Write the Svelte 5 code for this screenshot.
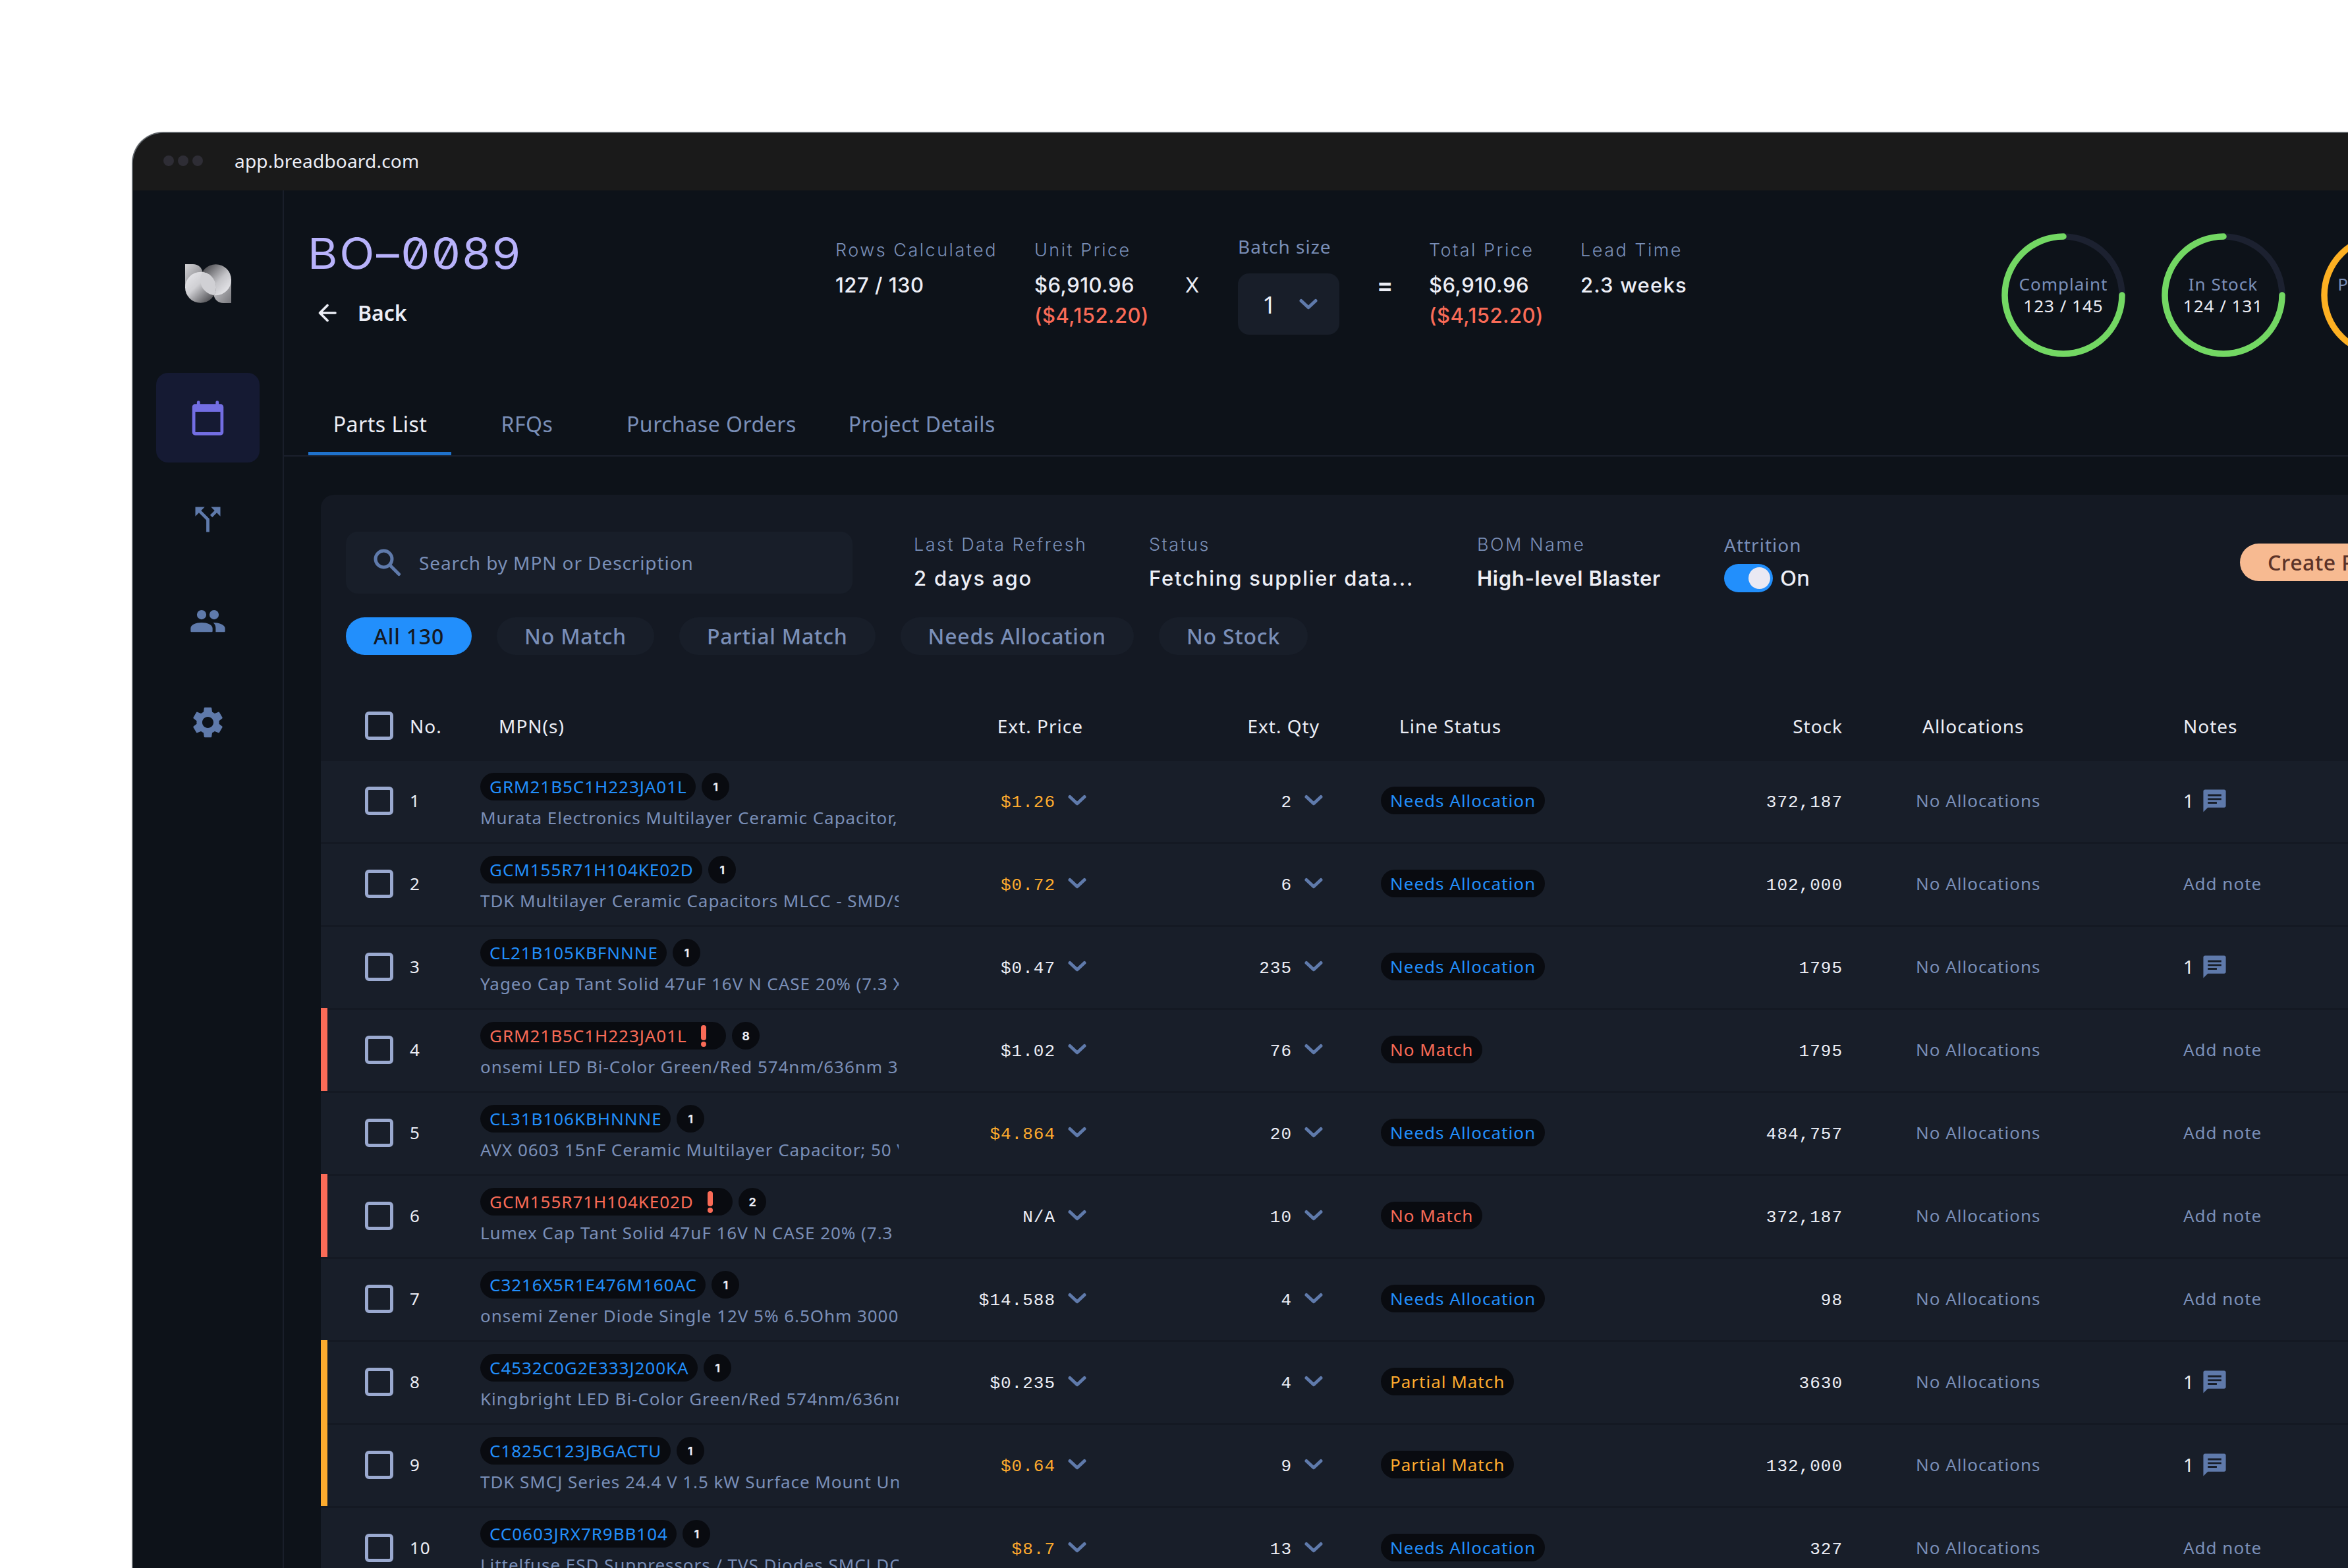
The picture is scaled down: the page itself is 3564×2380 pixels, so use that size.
<script>
  const tabs = ['Parts List', 'RFQs', 'Purchase Orders', 'Project Details'];
  const filters = ['All 130', 'No Match', 'Partial Match', 'Needs Allocation', 'No Stock'];

  let activeTab = $state('Parts List');
  let activeFilter = $state('All 130');
  let attrition = $state(true);

  const rings = [
    { label: 'Complaint', value: '123 / 145', color: '#73d863' },
    { label: 'In Stock', value: '124 / 131', color: '#73d863' },
    { label: 'Purchased', value: '90 / 98', color: '#fdb022' }
  ];

  const needs = 'Needs Allocation';
  const rows = [
    { mpn: 'GRM21B5C1H223JA01L', count: 1, desc: 'Murata Electronics Multilayer Ceramic Capacitor, 0.022uF', price: '$1.26', warn: true, qty: '2', status: needs, stock: '372,187', notes: 1 },
    { mpn: 'GCM155R71H104KE02D', count: 1, desc: 'TDK Multilayer Ceramic Capacitors MLCC - SMD/SMT', price: '$0.72', warn: true, qty: '6', status: needs, stock: '102,000', notes: 0 },
    { mpn: 'CL21B105KBFNNNE', count: 1, desc: 'Yageo Cap Tant Solid 47uF 16V N CASE 20% (7.3 X 4.3', price: '$0.47', qty: '235', status: needs, stock: '1795', notes: 1 },
    { mpn: 'GRM21B5C1H223JA01L', count: 8, desc: 'onsemi LED Bi-Color Green/Red 574nm/636nm 3', price: '$1.02', qty: '76', status: 'No Match', stock: '1795', notes: 0 },
    { mpn: 'CL31B106KBHNNNE', count: 1, desc: 'AVX 0603 15nF Ceramic Multilayer Capacitor; 50 V', price: '$4.864', warn: true, qty: '20', status: needs, stock: '484,757', notes: 0 },
    { mpn: 'GCM155R71H104KE02D', count: 2, desc: 'Lumex Cap Tant Solid 47uF 16V N CASE 20% (7.3', price: 'N/A', qty: '10', status: 'No Match', stock: '372,187', notes: 0 },
    { mpn: 'C3216X5R1E476M160AC', count: 1, desc: 'onsemi Zener Diode Single 12V 5% 6.5Ohm 3000', price: '$14.588', qty: '4', status: needs, stock: '98', notes: 0 },
    { mpn: 'C4532C0G2E333J200KA', count: 1, desc: 'Kingbright LED Bi-Color Green/Red 574nm/636nm 3', price: '$0.235', qty: '4', status: 'Partial Match', stock: '3630', notes: 1 },
    { mpn: 'C1825C123JBGACTU', count: 1, desc: 'TDK SMCJ Series 24.4 V 1.5 kW Surface Mount Uni', price: '$0.64', warn: true, qty: '9', status: 'Partial Match', stock: '132,000', notes: 1 },
    { mpn: 'CC0603JRX7R9BB104', count: 1, desc: 'Littelfuse ESD Suppressors / TVS Diodes SMCJ DO-214', price: '$8.7', warn: true, qty: '13', status: needs, stock: '327', notes: 0 }
  ];

  function tone(status) {
    if (status === 'No Match') return 'red';
    if (status === 'Partial Match') return 'amber';
    return 'blue';
  }
</script>

{#snippet chevron()}
  <svg class="chevron" width="28" height="18" viewBox="0 0 28 18">
    <path d="M3 3.5 14 13.8 25 3.5" />
  </svg>
{/snippet}

<div class="page">
  <div class="window">
    <div class="titlebar">
      <span class="dots"><i></i><i></i><i></i></span>
      <span class="url">app.breadboard.com</span>
    </div>

    <div class="app">
      <nav class="sidebar">
        <svg class="logo" width="70" height="59" viewBox="0 0 70 59">
          <defs>
            <linearGradient id="leaf" x1="0" y1="0" x2="1" y2="1">
              <stop offset="0" stop-color="#d3d3d6" />
              <stop offset="1" stop-color="#77777c" />
            </linearGradient>
            <linearGradient id="ringA" x1="0.15" y1="0.1" x2="0.85" y2="0.85">
              <stop offset="0" stop-color="#e2e2e6" />
              <stop offset="0.4" stop-color="#cfcfd3" />
              <stop offset="1" stop-color="#56565a" />
            </linearGradient>
            <linearGradient id="ringB" x1="0.15" y1="0.15" x2="0.85" y2="0.85">
              <stop offset="0" stop-color="#56565a" />
              <stop offset="0.6" stop-color="#c4c4c8" />
              <stop offset="1" stop-color="#e2e2e6" />
            </linearGradient>
            <clipPath id="left"><circle cx="23.5" cy="35.3" r="23.5" /></clipPath>
          </defs>
          <path fill="url(#leaf)" d="M0 0h12c8 0 13 5 15 13L0 36z" />
          <path fill="url(#leaf)" d="M70 59H58c-8 0-13-5-15-13L70 23z" />
          <circle cx="46.5" cy="23.7" r="23.5" fill="url(#ringB)" />
          <circle cx="23.5" cy="35.3" r="23.5" fill="url(#ringA)" />
          <circle cx="46.5" cy="23.7" r="23.5" fill="#d0d0d4" clip-path="url(#left)" />
        </svg>

        <a class="nav-item active" href="#projects" aria-label="Projects">
          <svg viewBox="0 0 24 24"><path fill-rule="evenodd" d="M19 3V1.9a1 1 0 0 0-2 0V3H7V1.9a1 1 0 0 0-2 0V3H4c-1.1 0-2 .9-2 2v16c0 1.1.7 2 2 2h16c1.3 0 2-.9 2-2V5c0-1.100-.9-2-2-2zM4 8h16v13H4z" /></svg>
        </a>
        <a class="nav-item" href="#split" aria-label="Split">
          <svg viewBox="0 0 24 24"><path d="M14 4l2.290 2.290-2.880 2.880 1.420 1.420 2.880-2.880L20 10V4zM10 4H4v6l2.290-2.290 4.710 4.700V20h2v-8.410l-5.290-5.300z" /></svg>
        </a>
        <a class="nav-item" href="#team" aria-label="Team">
          <svg viewBox="0 0 24 24"><path d="M16 11a3 3 0 1 0 0-6 3 3 0 0 0 0 6zM8 11a3 3 0 1 0 0-6 3 3 0 0 0 0 6zM8 13c-3.500 0-7 1.300-7 3.700V18.500q0 .5.5.5h13q.5 0 .5-.5V16.700C15 14.300 11.500 13 8 13zM15.400 13c1 .9 1.600 2 1.600 3.500V19h5.500q.5 0 .5-.5V16.700c0-2.300-4.200-3.700-7.600-3.700z" /></svg>
        </a>
        <a class="nav-item" href="#settings" aria-label="Settings">
          <svg viewBox="0 0 24 24"><path d="M19.140 12.940c.04-.3.06-.61.06-.94 0-.32-.02-.64-.07-.94l2.030-1.580c.18-.14.23-.41.12-.61l-1.920-3.320c-.12-.22-.37-.29-.59-.22l-2.390.96c-.5-.38-1.030-.7-1.620-.94l-.36-2.540c-.04-.24-.24-.41-.48-.41h-3.840c-.24 0-.43.17-.47.41l-.36 2.540c-.59.24-1.130.57-1.620.94l-2.390-.96c-.22-.08-.47 0-.59.22L2.740 8.870c-.12.21-.08.47.12.61l2.030 1.580c-.05.3-.09.63-.09.94s.02.64.07.94l-2.030 1.580c-.18.14-.23.41-.12.61l1.920 3.320c.12.22.37.29.59.22l2.390-.96c.5.38 1.030.7 1.620.94l.36 2.540c.05.24.24.41.48.41h3.840c.24 0 .44-.17.47-.41l.36-2.540c.59-.24 1.130-.56 1.620-.94l2.390.96c.22.08.47 0 .59-.22l1.920-3.320c.12-.22.07-.47-.12-.61l-2.010-1.580zM12 15.600c-1.980 0-3.600-1.620-3.600-3.600s1.620-3.600 3.600-3.600 3.600 1.620 3.600 3.600-1.620 3.600-3.600 3.600z" /></svg>
        </a>
      </nav>

      <main>
        <header>
          <div class="heading">
            <h1>BO–0089</h1>
            <a class="back" href="#back">
              <svg width="28" height="28" viewBox="0 0 28 28"><path d="M26 14H3M14 2.500 2.500 14 14 25.500" /></svg>
              Back
            </a>
          </div>

          <div class="totals">
            <div><span class="label">Rows Calculated</span><b>127 / 130</b></div>
            <div><span class="label">Unit Price</span><b>$6,910.96</b><b class="neg">($4,152.20)</b></div>
            <b class="op">X</b>
            <div class="batch">
              <span class="label noto">Batch size</span>
              <button class="select">1 {@render chevron()}</button>
            </div>
            <b class="op eq">=</b>
            <div><span class="label">Total Price</span><b>$6,910.96</b><b class="neg">($4,152.20)</b></div>
            <div><span class="label">Lead Time</span><b class="wide">2.3 weeks</b></div>
          </div>

          <div class="rings">
            {#each rings as ring}
              <div class="ring">
                <svg width="188" height="188" viewBox="0 0 188 188">
                  <circle cx="94" cy="94" r="89" stroke="#1c2130" />
                  <path d="M183 94A89 89 0 1 1 94 5" stroke={ring.color} />
                </svg>
                <span class="ring-label">{ring.label}</span>
                <span>{ring.value}</span>
              </div>
            {/each}
          </div>
        </header>

        <div class="tabs">
          {#each tabs as tab}
            <button class:active={tab === activeTab} onclick={() => (activeTab = tab)}>{tab}</button>
          {/each}
        </div>

        <section class="panel">
          <div class="toolbar">
            <div class="search">
              <svg width="42" height="42" viewBox="0 0 42 42"><circle cx="15.500" cy="15.500" r="12.500" /><path d="M25 25 38.500 38.500" /></svg>
              Search by MPN or Description
            </div>
            <div><span class="label">Last Data Refresh</span><b class="wide">2 days ago</b></div>
            <div><span class="label">Status</span><b class="wide">Fetching supplier data...</b></div>
            <div><span class="label">BOM Name</span><b class="strong">High-level Blaster</b></div>
            <div>
              <span class="label noto">Attrition</span>
              <div class="switch-row">
                <button class="switch" class:off={!attrition} aria-label="Attrition" onclick={() => (attrition = !attrition)}><i></i></button>
                {attrition ? 'On' : 'Off'}
              </div>
            </div>
            <button class="create">Create RFQ</button>
          </div>

          <div class="filters">
            {#each filters as filter}
              <button class:active={filter === activeFilter} onclick={() => (activeFilter = filter)}>{filter}</button>
            {/each}
          </div>

          <div class="grid head">
            <span class="bar"></span>
            <span class="check"></span>
            <span class="no">No.</span>
            <span class="h-mpn">MPN(s)</span>
            <span class="h-num">Ext. Price</span>
            <span class="h-num">Ext. Qty</span>
            <span class="h-status">Line Status</span>
            <span class="h-stock">Stock</span>
            <span class="h-alloc">Allocations</span>
            <span>Notes</span>
          </div>

          {#each rows as row, i}
            <div class="grid row">
              <span class="bar {tone(row.status)}"></span>
              <span class="check"></span>
              <span class="no">{i + 1}</span>
              <div class="mpn">
                <div class="mpn-line">
                  <span class="pill" class:red={row.status === 'No Match'}>
                    {row.mpn}
                    {#if row.status === 'No Match'}
                      <svg width="10" height="34" viewBox="0 0 10 34"><path d="M5 5v15" /><circle cx="5" cy="30" r="4" /></svg>
                    {/if}
                  </span>
                  <span class="count">{row.count}</span>
                </div>
                <div class="desc">{row.desc}</div>
              </div>
              <div class="num" class:warn={row.warn}><span>{row.price}</span>{@render chevron()}</div>
              <div class="num"><span>{row.qty}</span>{@render chevron()}</div>
              <div class="status"><span class="pill {tone(row.status)}">{row.status}</span></div>
              <div class="stock"><span>{row.stock}</span></div>
              <div class="alloc">No Allocations</div>
              {#if row.notes}
                <div class="notes">
                  <span>{row.notes}</span>
                  <svg width="41" height="41" viewBox="0 0 24 24"><path fill-rule="evenodd" d="M20.500 2h-17C2.700 2 2 2.700 2 3.500V22l4-4h14.500c.8 0 1.500-.7 1.500-1.500v-13c0-.8-.7-1.500-1.500-1.500zM6 6.200h12v1.700H6zM6 9.600h12v1.700H6zM6 12.900h8v1.700H6z" /></svg>
                </div>
              {:else}
                <div class="muted">Add note</div>
              {/if}
            </div>
          {/each}
        </section>
      </main>
    </div>
  </div>
</div>

<style>
  :global(body) {
    background: #fff;
    overflow: hidden;
  }

  .page {
    box-sizing: border-box;
    width: 3564px;
    height: 2380px;
    padding: 200px 0 0 200px;
    overflow: hidden;
    font-family: 'Noto Sans', sans-serif;
    font-size: 26px;
    color: #eceef6;
  }

  .page * {
    box-sizing: border-box;
  }

  button {
    border: 0;
    padding: 0;
    font: inherit;
    color: inherit;
    background: none;
    text-align: left;
    cursor: pointer;
  }

  a {
    color: inherit;
    text-decoration: none;
  }

  .window {
    width: 3364px;
    height: 2180px;
    border: 2px solid #62676b;
    border-width: 2px 0 0 2px;
    border-radius: 48px 0 0 0;
    background: #0d1219;
    overflow: hidden;
  }

  .titlebar {
    display: flex;
    align-items: center;
    height: 87px;
    padding: 0 0 4px 46px;
    background: #1a1a1a;
  }

  .dots {
    display: flex;
    gap: 6px;
    margin-right: 48px;
  }

  .dots i {
    width: 16px;
    height: 16px;
    border-radius: 50%;
    background: #2e2d35;
  }

  .url {
    font-size: 28px;
    letter-spacing: 0.2px;
  }

  .app {
    display: flex;
    height: 2091px;
  }

  /* sidebar */
  .sidebar {
    display: flex;
    flex-direction: column;
    align-items: center;
    gap: 18px;
    flex: none;
    width: 229px;
    padding-top: 112px;
    border-right: 2px solid #191e2a;
  }

  .logo {
    margin-bottom: 88px;
  }

  .nav-item {
    display: flex;
    align-items: center;
    justify-content: center;
    width: 157px;
    height: 136px;
    border-radius: 18px;
  }

  .nav-item svg {
    width: 57px;
    height: 57px;
    fill: #5f7aab;
  }

  .nav-item.active {
    background: #151a33;
  }

  .nav-item.active svg {
    fill: #736ee3;
  }

  main {
    flex: none;
    width: 3133px;
  }

  /* header */
  header {
    display: flex;
    align-items: flex-start;
    height: 309px;
    padding-left: 36px;
  }

  .heading {
    flex: none;
    width: 801px;
    padding-top: 56px;
  }

  h1 {
    margin: 0;
    font: 400 64px/80px Inter, sans-serif;
    font-feature-settings: 'zero';
    letter-spacing: 2.500px;
    color: #b8b2fb;
    transform: scaleX(1.085);
    transform-origin: left;
  }

  .back {
    display: flex;
    align-items: center;
    gap: 32px;
    margin-top: 28px;
    padding-left: 16px;
    font-size: 32px;
    line-height: 44px;
    font-weight: 600;
  }

  .back svg {
    fill: none;
    stroke: #eceef6;
    stroke-width: 3.6;
    stroke-linecap: round;
    stroke-linejoin: round;
  }

  .totals {
    display: grid;
    flex: none;
    grid-template-columns: 302px 229px 80px 211px 79px 230px 240px;
    align-items: start;
    width: 1770px;
    padding-top: 71px;
  }

  .label {
    display: block;
    font: 300 27px/40px Inter, sans-serif;
    letter-spacing: 2.500px;
    color: #7a8fb8;
    white-space: nowrap;
  }

  .label.noto {
    font: 400 28px/40px 'Noto Sans', sans-serif;
    letter-spacing: 1px;
  }

  .totals b,
  .toolbar b {
    display: block;
    font: 500 31px/46px Inter, sans-serif;
    letter-spacing: 0.5px;
    white-space: nowrap;
  }

  .totals .label {
    margin-bottom: 10px;
  }

  .totals b.wide {
    letter-spacing: 1.2px;
  }

  .totals b.neg {
    color: #fa6b57;
  }

  .totals b.op {
    margin-top: 50px;
    font-weight: 400;
  }

  .totals b.eq {
    font-weight: 700;
    font-size: 36px;
  }

  .totals .batch {
    margin-top: -6px;
  }

  .totals .batch .label {
    margin-bottom: 21px;
  }

  .select {
    display: flex;
    align-items: center;
    justify-content: space-between;
    width: 154px;
    height: 93px;
    padding: 0 33px 0 37px;
    border-radius: 17px;
    background: #181e29;
    font-size: 37px;
  }

  .chevron {
    flex: none;
    fill: none;
    stroke: #5f7aab;
    stroke-width: 5;
    stroke-linecap: round;
    stroke-linejoin: round;
  }

  .rings {
    display: flex;
    flex: none;
    gap: 54.500px;
    padding-top: 65px;
  }

  .ring {
    position: relative;
    display: flex;
    flex: none;
    flex-direction: column;
    align-items: center;
    justify-content: center;
    width: 188px;
    height: 188px;
    line-height: 33px;
    letter-spacing: 1px;
    white-space: nowrap;
  }

  .ring svg {
    position: absolute;
    inset: 0;
    fill: none;
    stroke-width: 9.500px;
    stroke-linecap: round;
  }

  .ring-label {
    color: #7a8fb8;
  }

  /* tabs */
  .tabs {
    display: flex;
    gap: 6px;
    height: 95px;
    padding-left: 37px;
    border-bottom: 2px solid #1b202c;
  }

  .tabs button {
    min-width: 217px;
    padding: 3px 36px 0 37px;
    text-align: center;
    font-size: 32px;
    letter-spacing: 0.5px;
    line-height: 44px;
    border-bottom: 5px solid transparent;
    color: #7a8fb8;
  }

  .tabs button.active {
    color: #eceef6;
    border-color: #1f72cc;
  }

  /* parts panel */
  .panel {
    margin: 58px 0 0 56px;
    border-radius: 20px 0 0 0;
    background: #141923;
  }

  .toolbar {
    display: grid;
    grid-template-columns: 862px 357px 498px 375px 783px 300px;
    align-items: start;
    padding: 56px 0 0 38px;
    height: 186px;
  }

  .search {
    display: flex;
    align-items: center;
    gap: 27px;
    width: 769px;
    height: 94px;
    padding-left: 42px;
    border-radius: 18px;
    background: #181e29;
    color: #7a8fb8;
    font-size: 28px;
    letter-spacing: 0.9px;
  }

  .search svg {
    fill: none;
    stroke: #5f7aab;
    stroke-width: 5;
    stroke-linecap: round;
  }

  .toolbar .label {
    margin-bottom: 8px;
  }

  .toolbar b.wide {
    letter-spacing: 1.8px;
  }

  .toolbar b.strong {
    font-weight: 600;
    letter-spacing: 0.7px;
  }

  .switch-row {
    display: flex;
    align-items: center;
    gap: 11px;
    font-size: 32px;
    line-height: 44px;
    font-weight: 500;
  }

  .switch {
    width: 74px;
    height: 43px;
    padding: 5px 4px 5px 37px;
    border-radius: 22px;
    background: #228ffc;
  }

  .switch.off {
    padding: 5px 37px 5px 4px;
    background: #39445a;
  }

  .switch i {
    display: block;
    width: 33px;
    height: 33px;
    border-radius: 50%;
    background: #eae9f3;
  }

  .create {
    margin-top: 18px;
    height: 57px;
    padding-left: 42px;
    border-radius: 29px 0 0 29px;
    background: #f7ba91;
    color: #5c3328;
    font-size: 32px;
    font-weight: 500;
    letter-spacing: 0.5px;
  }

  .filters {
    display: flex;
    gap: 38px;
    padding-left: 38px;
  }

  .filters button {
    height: 57px;
    padding: 0 42px;
    border-radius: 29px;
    background: #181e29;
    color: #7a8fb8;
    font-size: 32px;
    font-weight: 500;
    letter-spacing: 0.8px;
  }

  .filters button.active {
    background: #228ffc;
    color: #141923;
  }

  /* table */
  .grid {
    display: grid;
    grid-template-columns: 67px 67px 108px 635px 285px 359px 542px 247px 517px 250px;
    align-items: center;
    letter-spacing: 1px;
    white-space: nowrap;
  }

  .head {
    height: 158px;
    padding-top: 57px;
    font-size: 28px;
  }

  .no {
    padding-left: 1px;
  }

  .h-mpn {
    padding-left: 28px;
  }

  .h-num {
    padding-right: 5px;
    text-align: right;
  }

  .h-status {
    padding-left: 116px;
  }

  .h-stock {
    text-align: right;
  }

  .h-alloc {
    padding-left: 121px;
  }

  .row {
    height: 126px;
    background: linear-gradient(#141923 3px, #181e29 3px);
  }

  .bar {
    width: 10px;
    height: 100%;
  }

  .bar.red {
    background: #fa6b57;
  }

  .bar.amber {
    background: #fdab2e;
  }

  .check {
    width: 43px;
    height: 43px;
    border: 5px solid #9aa9cf;
    border-radius: 6px;
  }

  .mpn {
    align-self: start;
    padding-top: 21px;
  }

  .mpn-line {
    display: flex;
    gap: 9px;
    letter-spacing: 0.95px;
  }

  .pill {
    display: inline-flex;
    align-items: center;
    height: 42px;
    padding: 0 13.500px 0 14px;
    border-radius: 21px;
    background: #090b10;
    color: #228ffc;
  }

  .pill.red {
    color: #fa6b57;
  }

  .pill.amber {
    color: #fdab2e;
  }

  .pill svg {
    margin: 0 16px 0 20px;
    fill: #fa6b57;
    stroke: none;
  }

  .pill svg path {
    stroke: #fa6b57;
    stroke-width: 8;
    stroke-linecap: round;
  }

  .count {
    display: flex;
    align-items: center;
    justify-content: center;
    width: 42px;
    height: 42px;
    border-radius: 50%;
    background: #090b10;
    font: 700 18px Inter, sans-serif;
    letter-spacing: 0;
  }

  .desc {
    width: 635px;
    margin-top: 8px;
    line-height: 36px;
    letter-spacing: 0.95px;
    overflow: hidden;
    color: #7a8fb8;
  }

  .num,
  .stock {
    display: flex;
    align-items: center;
    justify-content: flex-end;
    font-family: 'Liberation Mono', monospace;
  }

  .num span,
  .stock span {
    padding-top: 5px;
  }

  .num.warn span {
    color: #fdab2e;
  }

  .num .chevron {
    margin-left: 19px;
  }

  .status {
    padding-left: 88px;
  }

  .status .pill {
    vertical-align: middle;
  }

  .alloc {
    padding-left: 111px;
    color: #7a8fb8;
  }

  .muted {
    color: #7a8fb8;
  }

  .notes {
    display: flex;
    align-items: center;
    gap: 10px;
    font-size: 28px;
  }

  .notes svg {
    fill: #5f7aab;
  }
</style>
